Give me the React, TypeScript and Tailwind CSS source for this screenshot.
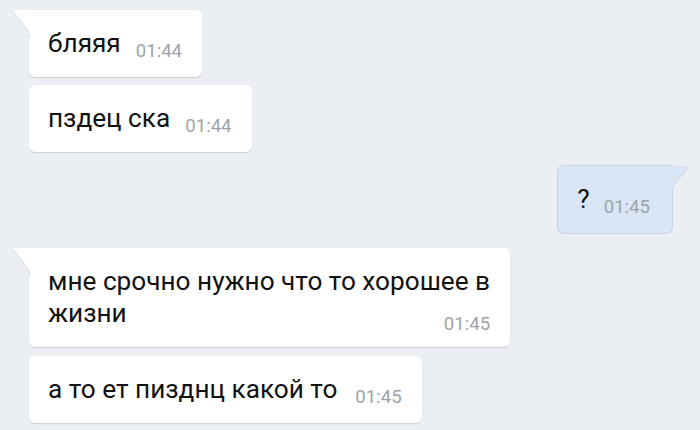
import React from "react";

const font = { fontFamily: "Roboto, 'Noto Sans', sans-serif" };

function LeftTail() {
  return (
    <svg
      className="absolute left-[-17px] top-0"
      width="19"
      height="28"
      viewBox="0 0 19 28"
    >
      <path d="M0 0 H19 V28 H17.5 C17.5 24 16.5 21 14.5 18.5 L0 0 Z" fill="#ffffff" />
      <path d="M0.5 0.5 L14.5 18.5 C16.5 21 17.5 24 17.5 28" fill="none" stroke="#d8dce1" strokeWidth="1" />
    </svg>
  );
}

function RightTail() {
  return (
    <svg
      className="absolute right-[-17px] top-0"
      width="19"
      height="28"
      viewBox="0 0 19 28"
    >
      <path d="M19 0 H0 V28 H1.5 C1.5 24 2.5 21 4.5 18.5 L19 0 Z" fill="#dae6f6" />
      <path d="M18.5 0.5 L4.5 18.5 C2.5 21 1.5 24 1.5 28" fill="none" stroke="#c6d3e4" strokeWidth="1" />
    </svg>
  );
}

function Time({ t }: { t: string }) {
  return <span className="text-[18.6px] leading-[20px] text-[#9ea3a9] shrink-0">{t}</span>;
}

function LeftBubble({
  text,
  time,
  tail,
  gap = "ml-[15px]",
}: {
  text: string;
  time: string;
  tail?: boolean;
  gap?: string;
}) {
  return (
    <div
      className={`relative bg-white ${tail ? "rounded-tr-[6px] rounded-b-[6px]" : "rounded-[6px]"} shadow-[0_1px_1px_rgba(0,0,0,0.14)] pl-[19px] pr-[20px] pt-[17px] pb-[13px] flex items-end self-start`}
    >
      {tail && <LeftTail />}
      <span className="text-[26.2px] leading-[32px] pb-[5px] text-[#111] whitespace-nowrap">{text}</span>
      <span className={gap}>
        <Time t={time} />
      </span>
    </div>
  );
}

export default function App() {
  return (
    <div className="w-[700px] h-[430px] bg-[#ebeef2] overflow-hidden flex flex-col" style={font}>
      <div className="flex flex-col pl-[29px] pt-[10px]">
        <LeftBubble text="бляяя" time="01:44" tail />
        <div className="h-[8px]" />
        <LeftBubble text="пздец ска" time="01:44" />
      </div>

      <div className="flex justify-end pr-[28px] mt-[14px]">
        <div className="relative bg-[#dae6f6] rounded-tl-[6px] rounded-b-[6px] shadow-[0_0_0_1px_#c6d3e4] pl-[19px] pr-[22px] pt-[17px] pb-[13px] flex items-end">
          <RightTail />
          <span className="text-[26.2px] leading-[32px] pb-[5px] text-[#111]">?</span>
          <span className="ml-[14px]">
            <Time t="01:45" />
          </span>
        </div>
      </div>

      <div className="flex flex-col pl-[29px] mt-[15px]">
        <div className="relative bg-white rounded-tr-[6px] rounded-b-[6px] shadow-[0_1px_1px_rgba(0,0,0,0.14)] pl-[19px] pr-[20px] pt-[17px] pb-[13px] flex flex-col self-start">
          <LeftTail />
          <span className="text-[26.2px] leading-[32px] text-[#111] whitespace-nowrap">
            мне срочно нужно что то хорошее в
          </span>
          <div className="flex items-end justify-between">
            <span className="text-[26.2px] leading-[32px] pb-[5px] text-[#111]">жизни</span>
            <Time t="01:45" />
          </div>
        </div>
        <div className="h-[9px]" />
        <LeftBubble text="а то ет пизднц какой то" time="01:45" gap="ml-[18px]" />
      </div>
    </div>
  );
}
